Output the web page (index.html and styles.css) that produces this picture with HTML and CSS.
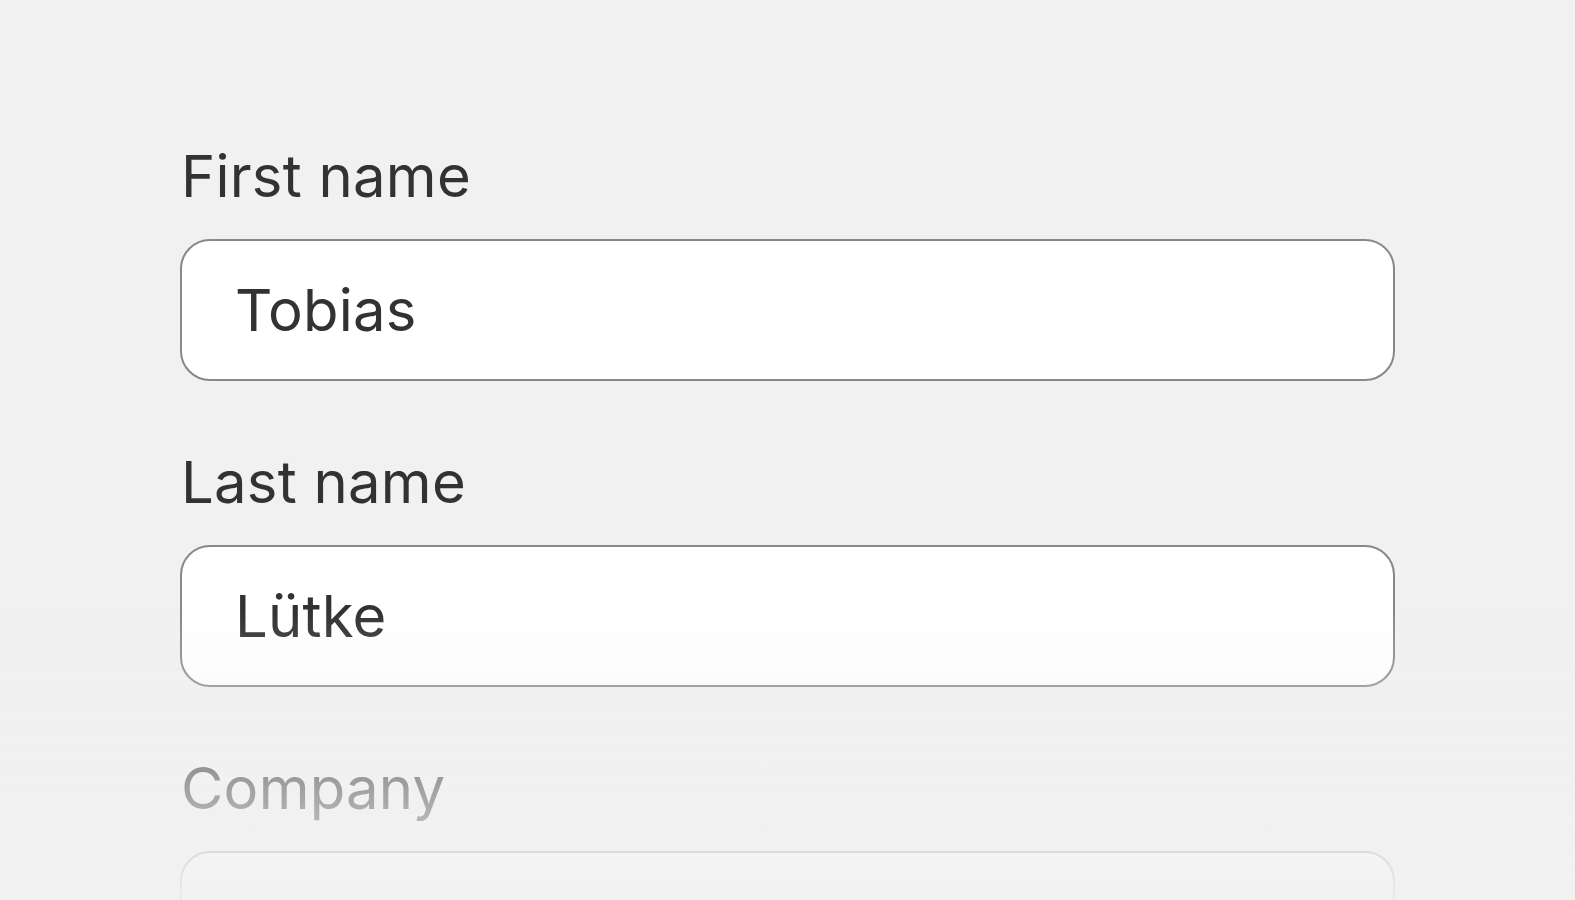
FILE: index.html
```html
<!DOCTYPE html>
<html lang="en">
<head>
<meta charset="utf-8">
<title>Form</title>
<link rel="stylesheet" href="styles.css">
</head>
<body>
<form class="form">
  <div class="field">
    <label class="label" for="first">First name</label>
    <input class="input" id="first" type="text" value="Tobias">
  </div>
  <div class="field">
    <label class="label" for="last">Last name</label>
    <input class="input" id="last" type="text" value="Lütke">
  </div>
  <div class="field">
    <label class="label" for="company">Company</label>
    <input class="input" id="company" type="text" value="">
  </div>
</form>
<div class="fade"></div>
</body>
</html>
```

FILE: styles.css
```css
html, body {
  margin: 0;
  height: 100%;
  overflow: hidden;
}
body {
  background: #f1f1f1;
  font-family: Inter, "Noto Sans", sans-serif;
  color: #323232;
  padding: 141px 180px 0 180px;
  box-sizing: border-box;
}
.form {
  display: flex;
  flex-direction: column;
  gap: 66px;
}
.field {
  display: flex;
  flex-direction: column;
  gap: 28px;
}
.label {
  font-size: 58px;
  line-height: 70px;
  height: 70px;
  letter-spacing: 0.25px;
  padding-left: 1px;
  color: #323232;
}
.input {
  box-sizing: border-box;
  height: 142px;
  width: 100%;
  margin: 0;
  border: 2px solid #888888;
  border-radius: 30px;
  background: #ffffff;
  padding: 0 40px 0 53px;
  font-family: Inter, "Noto Sans", sans-serif;
  font-size: 58px;
  letter-spacing: 0.2px;
  color: #323232;
  outline: none;
}
.fade {
  position: fixed;
  left: 0;
  top: 0;
  width: 100%;
  height: 100%;
  pointer-events: none;
  background: linear-gradient(to bottom, rgba(241,241,241,0) 610px, rgba(241,241,241,0.95) 900px);
}
```
